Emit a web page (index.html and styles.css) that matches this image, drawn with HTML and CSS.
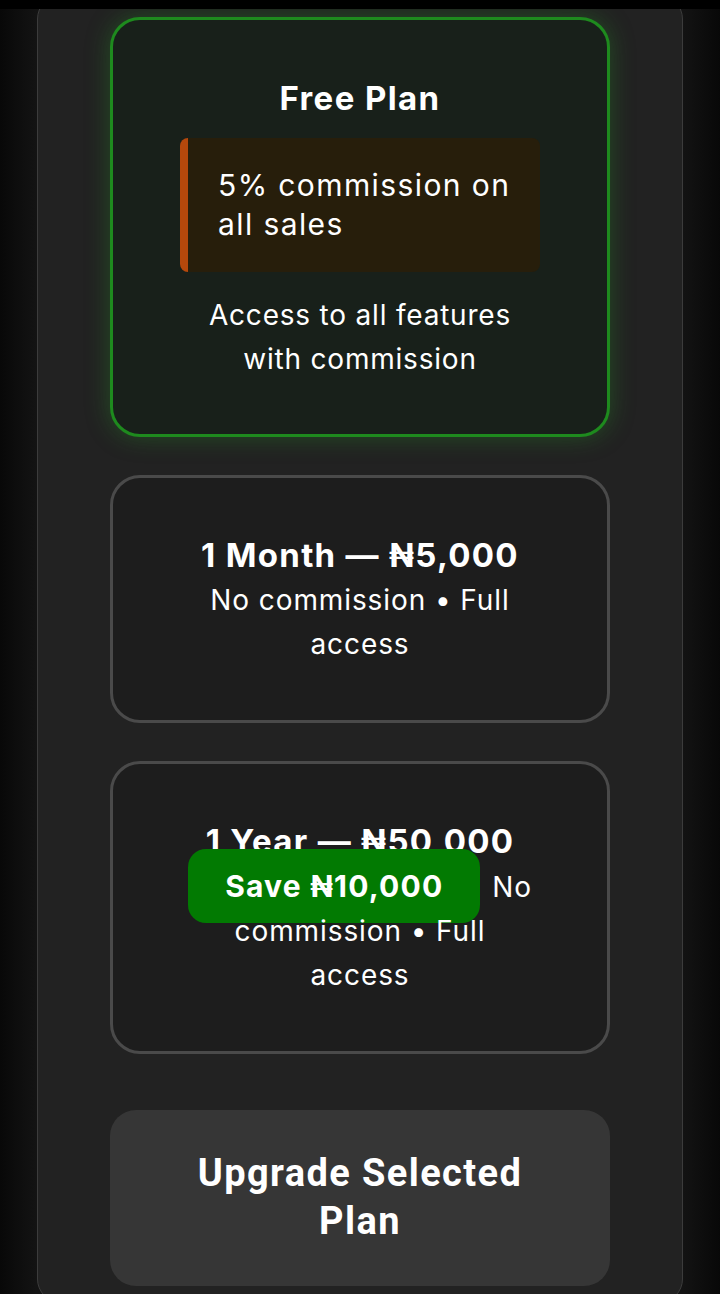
FILE: index.html
```html
<!DOCTYPE html>
<html lang="en">
<head>
  <meta charset="UTF-8">
  <meta name="viewport" content="width=device-width, initial-scale=1.0">
  <title>Upgrade Plan</title>
  <link rel="stylesheet" href="styles.css">
</head>
<body>
  <div class="topbar"></div>
  <div class="panel">
    <div class="plan plan-free">
      <h3 class="plan-title">Free Plan</h3>
      <div class="commission">5% commission on all sales</div>
      <p class="plan-desc">Access to all features with commission</p>
    </div>

    <div class="plan">
      <h3 class="plan-price">1 Month — ₦5,000</h3>
      <p class="plan-sub">No commission • Full access</p>
    </div>

    <div class="plan">
      <h3 class="plan-price">1 Year — ₦50,000</h3>
      <p class="plan-sub"><span class="save">Save ₦10,000</span> No commission • Full access</p>
    </div>

    <button class="upgrade">Upgrade Selected Plan</button>
  </div>
</body>
</html>
```

FILE: styles.css
```css
body {
  font-family: 'Inter', 'Noto Sans', sans-serif;
  background: linear-gradient(90deg, #080808, #131313 5%, #131313 95%, #080808);
  color: #fff;
  margin: 0;
  padding: 0;
  overflow: hidden;
}
.topbar {
  position: relative;
  z-index: 2;
  height: 9px;
  background: #000;
}
.panel {
  margin: -14px 37px 0;
  padding: 21px 0 16px;
  background: #222;
  border: 1px solid #3c3c3c;
  border-radius: 24px;
  display: flex;
  flex-direction: column;
  align-items: center;
  gap: 38px;
}
.plan {
  width: 500px;
  box-sizing: border-box;
  padding: 54px 72px 54px;
  background: #1d1d1d;
  border: 3px solid #4a4a4a;
  border-radius: 30px;
  text-align: center;
}
.plan-free {
  padding: 58px 67px 53px;
  background: #18201a;
  border-color: #1e8a1e;
  box-shadow: 0 0 24px rgba(40, 160, 40, 0.35);
}
.plan-title {
  margin: 0 0 20px;
  font-size: 33px;
  line-height: 40px;
  font-weight: 700;
  letter-spacing: 1.4px;
}
.commission {
  text-align: left;
  background: #271e0b;
  border-left: 8px solid #b5480c;
  border-radius: 8px;
  padding: 28px 8px 28px 30px;
  font-size: 30px;
  line-height: 39px;
  letter-spacing: 1.4px;
}
.plan-desc {
  margin: 21px 0 0;
  font-size: 28px;
  line-height: 44px;
  letter-spacing: 0.8px;
}
.plan-price {
  margin: 0;
  font-size: 33px;
  line-height: 46px;
  font-weight: 700;
  letter-spacing: 1.3px;
}
.plan-sub {
  margin: 0;
  font-size: 28px;
  line-height: 44px;
  letter-spacing: 0.9px;
}
.save {
  background: #027a02;
  color: #fff;
  font-weight: 700;
  font-size: 30px;
  letter-spacing: 1.2px;
  padding: 19px 37px;
  border-radius: 18px;
  margin-right: 3px;
}
.upgrade {
  margin-top: 18px;
  width: 500px;
  padding: 39px 70px 41px;
  background: #363636;
  color: #fff;
  border: none;
  border-radius: 26px;
  font-family: 'Roboto', sans-serif;
  font-size: 38px;
  line-height: 48px;
  font-weight: 700;
  letter-spacing: 1.4px;
  cursor: pointer;
}
```
